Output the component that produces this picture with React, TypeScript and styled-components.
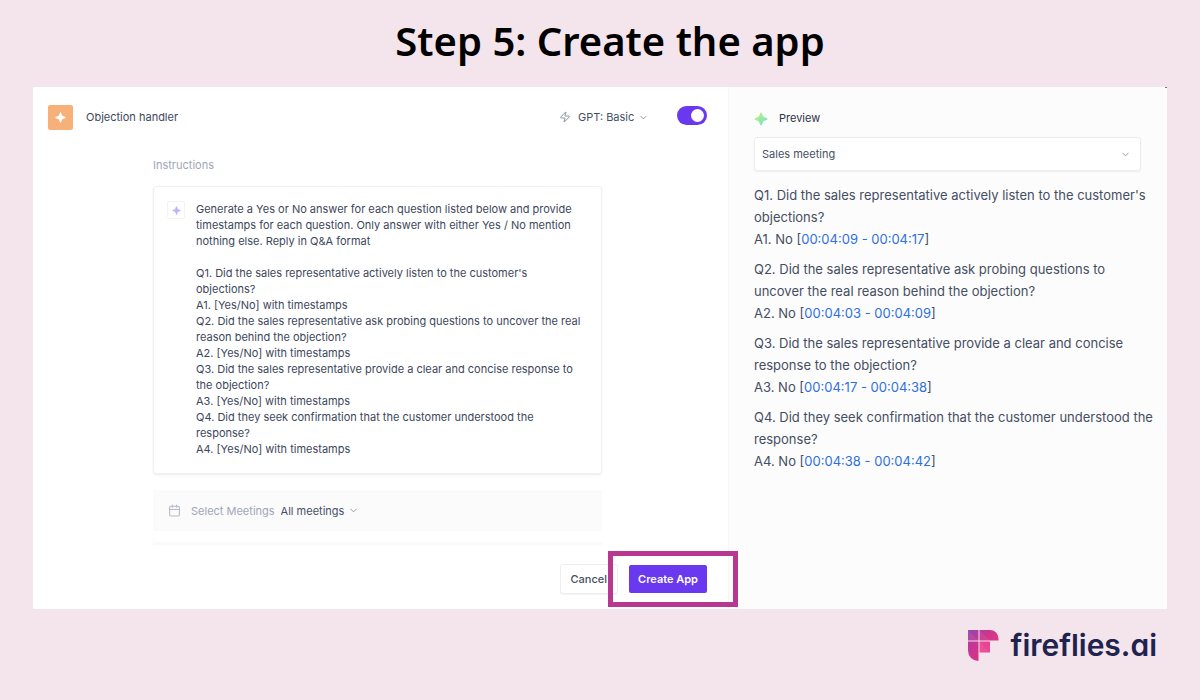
import React from 'react';
import styled, { createGlobalStyle } from 'styled-components';
import { Calendar, ChevronDown, Zap } from 'lucide-react';

const GlobalStyle = createGlobalStyle`
  *, *::before, *::after { box-sizing: border-box; }
  body {
    margin: 0;
    background: #f4e4eb;
    color: #3d475c;
    font-family: Inter, "Liberation Sans", sans-serif;
    font-size: 11px;
    line-height: 16px;
  }
  button, select, textarea { font: inherit; color: inherit; }
`;

const Page = styled.div`
  display: flex;
  flex-direction: column;
  min-height: 100vh;
  padding: 0 33px;
`;

const Title = styled.h1`
  margin: 0;
  padding: 13px 0 18px 20px;
  color: #000;
  font-family: "Noto Sans", "Open Sans", sans-serif;
  font-size: 40px;
  font-weight: 600;
  line-height: 56px;
  text-align: center;
`;

const Panel = styled.main`
  position: relative;
  display: grid;
  grid-template-columns: 695fr 439fr;
  background: #fff;
  border-radius: 2px;

  &::after {
    content: '';
    position: absolute;
    top: 0;
    right: 0;
    width: 2px;
    height: 1px;
    background: #77727a;
  }
`;

const Editor = styled.section`
  display: flex;
  flex-direction: column;
  padding: 15px 21px 15px 15px;
`;

const EditorHeader = styled.header`
  display: flex;
  align-items: center;
  height: 30px;
`;

const AppBadge = styled.span`
  display: grid;
  place-items: center;
  width: 25px;
  height: 25px;
  margin-right: 13px;
  border-radius: 2px;
  background: #f8b079;
`;

const AppName = styled.span`
  flex: 1;
`;

const PickerFrame = styled.span`
  position: relative;
  display: inline-flex;
  align-items: center;

  > svg {
    position: absolute;
    right: 0;
    color: #8b93a3;
    pointer-events: none;
  }
`;

const Picker = styled.select`
  appearance: none;
  padding: 0 14px 0 0;
  border: 0;
  background: transparent;
  color: #465064;
`;

const ModelIcon = styled(Zap)`
  margin-right: 7px;
  color: #8b93a3;
`;

const Switch = styled.input`
  appearance: none;
  display: flex;
  width: 30px;
  height: 19px;
  margin: 0 0 3px 28px;
  padding: 3px;
  border-radius: 10px;
  background: #6938ef;

  &::before {
    content: '';
    width: 13px;
    height: 13px;
    border-radius: 50%;
    background: #fff;
  }
  &:checked { justify-content: flex-end; }
`;

const Form = styled.div`
  display: flex;
  flex-direction: column;
  margin: 25px 105px 0;
`;

const FieldLabel = styled.label`
  color: #a0a6b8;
`;

const PromptCard = styled.div`
  display: flex;
  align-items: flex-start;
  gap: 11px;
  margin-top: 13px;
  padding: 14px 16px 16px 13px;
  border: 1px solid #f0f0f2;
  border-radius: 3px;
  box-shadow: 0 1px 2px rgba(20, 24, 40, 0.08);
`;

const PromptBadge = styled.span`
  display: grid;
  place-items: center;
  flex: none;
  width: 18px;
  height: 18px;
  border: 1px solid #f4f4f7;
  border-radius: 2px;
`;

const Prompt = styled.textarea`
  flex: 1;
  min-width: 0;
  margin: 0;
  padding: 0;
  border: 0;
  outline: 0;
  resize: none;
  overflow: hidden;
  background: transparent;
`;

const MeetingFilter = styled.div`
  display: flex;
  align-items: center;
  height: 41px;
  margin-top: 16px;
  padding: 0 15px;
  background: #fbfbfc;
`;

const CalendarIcon = styled(Calendar)`
  margin-right: 10px;
  color: #b6bbc8;
`;

const FilterLabel = styled(FieldLabel)`
  margin-right: 6px;
`;

const NextRow = styled.div`
  height: 3px;
  margin-top: 11px;
  background: #fafafb;
`;

const Actions = styled.div`
  display: flex;
  align-items: center;
  justify-content: flex-end;
  gap: 11px;
  margin-top: 19px;
`;

const CancelButton = styled.button`
  height: 30px;
  padding: 0 10px;
  border: 1px solid #eeeef2;
  border-radius: 3px;
  background: #fff;
  box-shadow: 0 1px 1px rgba(20, 24, 40, 0.05);
  color: #465064;
  font-weight: 500;
`;

const Spotlight = styled.div`
  position: relative;

  &::after {
    content: '';
    position: absolute;
    inset: -14px -31px -14px -21px;
    border: 5px solid #b83791;
    pointer-events: none;
  }
`;

const CreateButton = styled.button`
  display: block;
  height: 28px;
  padding: 0 9px;
  border: 0;
  border-radius: 2px;
  background: #6938ef;
  color: #fff;
  font-weight: 600;
`;

const Preview = styled.section`
  padding: 22px 10px 15px 25px;
  border-left: 1px solid #f6f6f7;
  background: #fcfcfc;
`;

const PreviewTitle = styled.h2`
  display: flex;
  align-items: center;
  gap: 11px;
  margin: 0 0 9px;
  color: #2b3346;
  font-size: 11px;
  font-weight: 400;
  line-height: 19px;
`;

const MeetingFrame = styled(PickerFrame)`
  display: flex;
  margin-right: 16px;
  > svg { right: 10px; }
`;

const MeetingPicker = styled(Picker)`
  width: 100%;
  height: 34px;
  padding: 0 26px 0 7px;
  border: 1px solid #ececf0;
  border-radius: 3px;
  background: #fff;
  box-shadow: 0 1px 2px rgba(20, 24, 40, 0.06);
`;

const Answers = styled.div`
  margin-top: 13px;
  font-size: 13px;
  line-height: 22px;
  color: #454e62;
`;

const Answer = styled.div`
  margin-bottom: 8px;
`;

const AnswerLine = styled.p`
  margin: 0;
`;

const TimeLink = styled.a`
  color: #2f6fe0;
  text-decoration: none;
`;

const Footer = styled.footer`
  display: flex;
  align-items: center;
  justify-content: flex-end;
  gap: 12px;
  padding: 16px 10px 0 0;
`;

const Wordmark = styled.span`
  color: #21234f;
  font-size: 30px;
  font-weight: 600;
  line-height: 40px;
  font-feature-settings: "cv11";
`;

const Sparkle = ({ size, fill }: { size: number; fill: string }) => (
  <svg width={size} height={size} viewBox="0 0 14 14" aria-hidden="true">
    <defs>
      <linearGradient id="mint" x1="0" y1="0" x2="1" y2="1">
        <stop offset="0.25" stopColor="#b4ee78" />
        <stop offset="0.8" stopColor="#73e3d1" />
      </linearGradient>
    </defs>
    <path
      d="M7 .4c.4 0 .6.3.8.8l1.1 2.9c.2.5.5.8 1 1l2.9 1.1c.5.2.8.4.8.8s-.3.6-.8.8L9.900 8.900c-.5.2-.8.5-1 1l-1.100 2.900c-.2.5-.4.8-.8.8s-.6-.3-.8-.8L5.100 9.900c-.2-.5-.5-.8-1-1L1.200 7.800C.7 7.600.4 7.400.4 7s.3-.6.8-.8l2.900-1.100c.5-.2.8-.5 1-1l1.100-2.900c.2-.5.4-.8.8-.8Z"
      fill={fill}
    />
  </svg>
);

const FirefliesMark = () => (
  <svg width="31" height="31" viewBox="0 0 31 31" aria-hidden="true">
    <defs>
      <linearGradient id="mark" gradientUnits="userSpaceOnUse" x1="0" y1="0" x2="24" y2="24">
        <stop offset="0" stopColor="#8f49ae" />
        <stop offset="0.5" stopColor="#ce358d" />
        <stop offset="1" stopColor="#e93b8d" />
      </linearGradient>
      <linearGradient id="stem" x1="0" y1="0" x2="0.6" y2="1">
        <stop offset="0" stopColor="#b73a9d" />
        <stop offset="1" stopColor="#d93286" />
      </linearGradient>
    </defs>
    <path d="M0 0H10.500V10.500H0Z" fill="url(#mark)" />
    <path d="M11.500 0H22a8.500 8.500 0 0 1 8.500 8.500V10.500H11.500Z" fill="url(#mark)" />
    <path d="M0 11.500H10.500V31A10.500 10.500 0 0 1 0 20.500Z" fill="url(#stem)" />
    <path d="M11.500 11.500H22V22.500H11.500Z" fill="#e94492" />
    <path d="M0 0L10.500 10.500H0ZM11.500 0L22 10.500H11.500ZM11.500 11.500L22 22.500H11.500Z" fill="#fff" opacity=".06" />
  </svg>
);

const PROMPT = `Generate a Yes or No answer for each question listed below and provide timestamps for each question. Only answer with either Yes / No mention nothing else. Reply in Q&A format

Q1. Did the sales representative actively listen to the customer's objections?
A1. [Yes/No] with timestamps
Q2. Did the sales representative ask probing questions to uncover the real reason behind the objection?
A2. [Yes/No] with timestamps
Q3. Did the sales representative provide a clear and concise response to the objection?
A3. [Yes/No] with timestamps
Q4. Did they seek confirmation that the customer understood the response?
A4. [Yes/No] with timestamps`;

const ANSWERS = [
  { question: "Did the sales representative actively listen to the customer's objections?", from: '00:04:09', to: '00:04:17' },
  { question: 'Did the sales representative ask probing questions to uncover the real reason behind the objection?', from: '00:04:03', to: '00:04:09' },
  { question: 'Did the sales representative provide a clear and concise response to the objection?', from: '00:04:17', to: '00:04:38' },
  { question: 'Did they seek confirmation that the customer understood the response?', from: '00:04:38', to: '00:04:42' },
];

export default function App() {
  return (
    <>
      <GlobalStyle />
      <Page>
        <Title>Step 5: Create the app</Title>
        <Panel>
          <Editor>
            <EditorHeader>
              <AppBadge><Sparkle size={11} fill="#fff" /></AppBadge>
              <AppName>Objection handler</AppName>
              <ModelIcon size={12} strokeWidth={2} />
              <PickerFrame>
                <Picker aria-label="Model" defaultValue="basic">
                  <option value="basic">GPT: Basic</option>
                </Picker>
                <ChevronDown size={11} strokeWidth={2} />
              </PickerFrame>
              <Switch type="checkbox" role="switch" aria-label="App enabled" defaultChecked />
            </EditorHeader>
            <Form>
              <FieldLabel htmlFor="prompt">Instructions</FieldLabel>
              <PromptCard>
                <PromptBadge><Sparkle size={9} fill="#bdb4fb" /></PromptBadge>
                <Prompt id="prompt" rows={16} spellCheck={false} defaultValue={PROMPT} />
              </PromptCard>
              <MeetingFilter>
                <CalendarIcon size={13} strokeWidth={2} />
                <FilterLabel htmlFor="meetings">Select Meetings</FilterLabel>
                <PickerFrame>
                  <Picker id="meetings" defaultValue="all">
                    <option value="all">All meetings</option>
                  </Picker>
                  <ChevronDown size={11} strokeWidth={2} />
                </PickerFrame>
              </MeetingFilter>
              <NextRow />
            </Form>
            <Actions>
              <CancelButton type="button">Cancel</CancelButton>
              <Spotlight>
                <CreateButton type="button">Create App</CreateButton>
              </Spotlight>
            </Actions>
          </Editor>
          <Preview>
            <PreviewTitle><Sparkle size={14} fill="url(#mint)" />Preview</PreviewTitle>
            <MeetingFrame>
              <MeetingPicker aria-label="Preview meeting" defaultValue="sales">
                <option value="sales">Sales meeting</option>
              </MeetingPicker>
              <ChevronDown size={11} strokeWidth={2} />
            </MeetingFrame>
            <Answers>
              {ANSWERS.map(({ question, from, to }, i) => (
                <Answer key={question}>
                  <AnswerLine>{`Q${i + 1}. ${question}`}</AnswerLine>
                  <AnswerLine>
                    {`A${i + 1}. No [`}
                    <TimeLink href="#">{`${from} - ${to}`}</TimeLink>]
                  </AnswerLine>
                </Answer>
              ))}
            </Answers>
          </Preview>
        </Panel>
        <Footer>
          <FirefliesMark />
          <Wordmark>fireflies.ai</Wordmark>
        </Footer>
      </Page>
    </>
  );
}
